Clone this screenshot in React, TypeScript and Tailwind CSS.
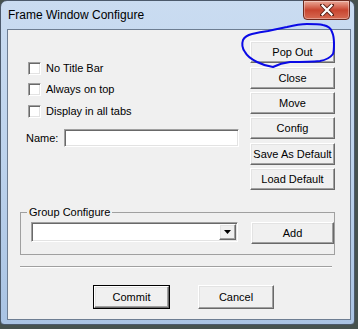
import React from 'react';

const font = { fontFamily: '"Liberation Sans", Arial, sans-serif' };

// classic raised 3d button look
const raised =
  'bg-[#f0f0f0] border border-t-white border-l-white border-r-[#696969] border-b-[#696969] shadow-[inset_-1px_-1px_0_#a0a0a0,inset_1px_1px_0_#e3e3e3]';
const sunken =
  'bg-white border border-t-[#a0a0a0] border-l-[#a0a0a0] border-r-white border-b-white shadow-[inset_1px_1px_0_#696969,inset_-1px_-1px_0_#e3e3e3]';

const Btn: React.FC<{ label: string; className?: string }> = ({ label, className }) => (
  <button
    className={`${raised} flex items-center justify-center text-[11px] text-black leading-none ${className ?? ''}`}
  >
    {label}
  </button>
);

const Check: React.FC<{ label: string; className?: string }> = ({ label, className }) => (
  <label className={`flex items-center ml-[2px] ${className ?? ''}`}>
    <span className={`${sunken} w-[13px] h-[13px] shrink-0`} />
    <span className="ml-[5px] text-[11px] leading-none text-black">{label}</span>
  </label>
);

export default function App() {
  return (
    <div className="relative w-[358px] h-[329px] overflow-hidden bg-[#46524f]" style={font}>
      {/* window */}
      <div className="w-[355px] h-[325px] rounded-t-[7px] rounded-b-[4px] border border-[#4c5a6c] bg-gradient-to-b from-[#cadcf1] via-[#bcd2ec] to-[#a9c3e3] flex flex-col">
        {/* title bar */}
        <div className="h-[28px] flex items-start justify-between">
          <span className="ml-[7px] mt-[7px] text-[12px] leading-[14px] text-black">
            Frame Window Configure
          </span>
          <div className="mr-[4px] -mt-px w-[47px] h-[20px] rounded-b-[4px] border border-[#6b2a1f] bg-gradient-to-b from-[#e9a898] via-[#c8442f] to-[#d66a52] flex items-center justify-center shadow-[inset_0_0_0_1px_rgba(255,255,255,0.35)]">
            <svg width="14" height="12" viewBox="0 0 14 12">
              <path
                d="M2 1 L12 11 M12 1 L2 11"
                stroke="#5a2218"
                strokeWidth="4"
                strokeLinecap="square"
              />
              <path
                d="M2.5 1.5 L11.5 10.5 M11.5 1.5 L2.5 10.5"
                stroke="#ffffff"
                strokeWidth="2.2"
                strokeLinecap="square"
              />
            </svg>
          </div>
        </div>

        {/* client area */}
        <div className="ml-[6px] w-[344px] h-[291px] border border-[#6d7d92] bg-[#f0f0f0] flex flex-col">
          <div className="flex pt-[11px]">
            <div className="w-[242px] pl-[18px] pt-[21px] flex flex-col">
              <Check label="No Title Bar" />
              <Check label="Always on top" className="mt-[8px]" />
              <Check label="Display in all tabs" className="mt-[9px]" />
              <div className="flex items-center mt-[11px]">
                <span className="text-[11px] leading-none text-black">Name:</span>
                <div className={`${sunken} ml-[6px] w-[175px] h-[18px]`} />
              </div>
            </div>
            <div className="flex flex-col">
              <Btn label="Pop Out" className="w-[85px] h-[22px]" />
              <Btn label="Close" className="w-[85px] h-[22px] mt-[4px]" />
              <Btn label="Move" className="w-[85px] h-[22px] mt-[3px]" />
              <Btn label="Config" className="w-[85px] h-[22px] mt-[3px]" />
              <Btn label="Save As Default" className="w-[85px] h-[22px] mt-[4px]" />
              <Btn label="Load Default" className="w-[85px] h-[22px] mt-[3px]" />
            </div>
          </div>

          {/* group box */}
          <fieldset className="ml-[12px] mt-[16px] w-[315px] h-[49px] border border-[#a0a0a0]">
            <legend className="ml-[6px] px-[2px] text-[11px] leading-[13px] text-black">
              Group Configure
            </legend>
            <div className="flex items-start mt-[3px] ml-[10px]">
              <div className={`${sunken} w-[207px] h-[20px] flex justify-end items-center pr-[1px]`}>
                <div className={`${raised} w-[17px] h-[16px] flex items-center justify-center`}>
                  <svg width="7" height="4" viewBox="0 0 7 4">
                    <path d="M0 0 H7 L3.5 4 Z" fill="#000" />
                  </svg>
                </div>
              </div>
              <Btn label="Add" className="ml-[13px] w-[83px] h-[22px]" />
            </div>
          </fieldset>

          {/* separator */}
          <div className="ml-[12px] mt-[11px] w-[312px] border-t border-t-[#a0a0a0] border-b border-b-white" />

          <div className="flex mt-[17px] ml-[85px]">
            <div className="border border-black">
              <Btn label="Commit" className="w-[75px] h-[22px]" />
            </div>
            <Btn label="Cancel" className="ml-[28px] w-[76px] h-[24px]" />
          </div>
        </div>
      </div>

      {/* hand drawn annotation */}
      <svg className="absolute left-0 top-0 pointer-events-none" width="358" height="329">
        <path
          d="M268 31 C276 29 282 28 287 27 C295 25 301 24 307 24 C314 24 319 24 323 25 C328 26 331 28 332 32 C334 36 334 40 334 44 C334 48 334 51 333 54 C330 58 326 60 320 61 C310 62 300 62 290 62 C282 63 277 65 273 67 C266 66 261 64 257 62 C251 59 247 56 245 52 C242 48 242 43 243 40 C245 36 248 35 252 34 C256 33 260 32 268 31"
          fill="none"
          stroke="#0a0ae6"
          strokeWidth="2"
          strokeLinecap="round"
        />
      </svg>
    </div>
  );
}
